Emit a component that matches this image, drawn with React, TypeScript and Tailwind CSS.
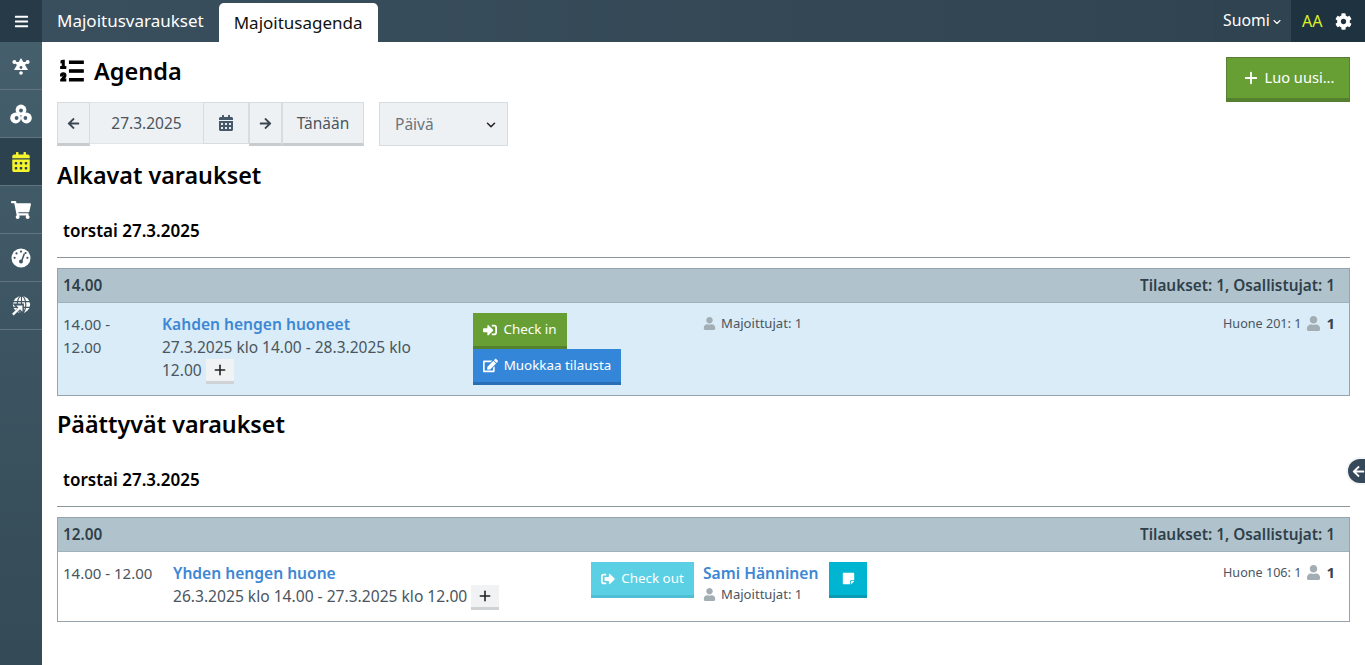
import { ReactNode } from 'react';
import { ChevronDown, Plus } from 'lucide-react';
import { RiListOrdered2 } from 'react-icons/ri';
import {
  FaArrowLeft,
  FaArrowRight,
  FaBars,
  FaCalendarAlt,
  FaCog,
  FaEdit,
  FaShoppingCart,
  FaSignInAlt,
  FaSignOutAlt,
  FaStickyNote,
  FaUser,
} from 'react-icons/fa';

function TreeIcon() {
  return (
    <svg viewBox="0 0 20 20" className="w-[20px] h-[20px]" fill="currentColor">
      <path d="M10 2 17 14H3Z" />
      <circle cx="3.4" cy="6" r="2" />
      <circle cx="16.6" cy="6" r="2" />
      <path d="M3 6h14l-3 3H6Z" />
      <circle cx="10" cy="17" r="1.8" />
      <circle cx="10" cy="11.5" r="1.4" fill="#46606e" />
    </svg>
  );
}

function ClusterIcon() {
  return (
    <svg viewBox="0 0 22 20" className="w-[22px] h-[20px]" fill="currentColor">
      <circle cx="11" cy="6" r="5.4" />
      <circle cx="5.6" cy="14" r="5.4" />
      <circle cx="16.4" cy="14" r="5.4" />
      <circle cx="11" cy="6.5" r="1.9" fill="#46606e" />
      <circle cx="6.6" cy="14" r="1.9" fill="#46606e" />
      <circle cx="15.4" cy="14" r="1.9" fill="#46606e" />
    </svg>
  );
}

function GaugeIcon() {
  return (
    <svg viewBox="0 0 20 20" className="w-[20px] h-[20px]">
      <circle cx="10" cy="10" r="9.5" fill="currentColor" />
      <g fill="#3f5765">
        <circle cx="10" cy="3.6" r="1.1" />
        <circle cx="5.5" cy="5.4" r="1.1" />
        <circle cx="3.6" cy="9.8" r="1.1" />
        <circle cx="16.4" cy="9.8" r="1.1" />
        <circle cx="14.6" cy="5" r="1.1" />
      </g>
      <path d="M13.4 5.6 10.9 12.2" stroke="#3f5765" strokeWidth="1.5" />
      <circle cx="10" cy="13.5" r="2" fill="#3f5765" />
    </svg>
  );
}

function GlobeArrowIcon() {
  return (
    <svg viewBox="0 0 22 22" className="w-[21px] h-[21px]" fill="none">
      <circle cx="11" cy="10" r="9" fill="currentColor" />
      <g stroke="#3f5765" strokeWidth="1.2">
        <path d="M2 7h18M2 13h18M11 1v18" />
        <ellipse cx="11" cy="10" rx="4.5" ry="9" />
      </g>
      <path d="M1.5 21 9 13.5M5 10.5h7v7Z" stroke="#3f5765" strokeWidth="3" />
      <path d="M2 20.5 9 13.5" stroke="currentColor" strokeWidth="2.4" />
      <path d="M5.5 11h6.5v6.5Z" fill="currentColor" />
    </svg>
  );
}

const navItems: { icon: ReactNode; active?: boolean }[] = [
  { icon: <TreeIcon /> },
  { icon: <ClusterIcon /> },
  { icon: <FaCalendarAlt className="text-[20px]" />, active: true },
  { icon: <FaShoppingCart className="text-[20px]" /> },
  { icon: <GaugeIcon /> },
  { icon: <GlobeArrowIcon /> },
];

function Sidebar() {
  return (
    <aside className="w-[42px] shrink-0 bg-gradient-to-b from-[#46606e] to-[#344a56] flex flex-col">
      <div className="h-[42px] bg-[#263a47] flex items-center justify-center text-white">
        <FaBars className="text-[15px]" />
      </div>
      {navItems.map((item, i) => (
        <div
          key={i}
          className={
            item.active
              ? 'h-[48px] flex items-center justify-center border-b border-[#62747f] bg-[#2c424f] text-[#f4f52c]'
              : 'h-[48px] flex items-center justify-center border-b border-[#62747f] text-white'
          }
        >
          {item.icon}
        </div>
      ))}
    </aside>
  );
}

function TopBar() {
  return (
    <header className="h-[42px] bg-gradient-to-r from-[#3a4f5d] to-[#2f4350] flex text-white">
      <div className="h-full px-[15px] flex items-center text-[17px] pb-[1px]">Majoitusvaraukset</div>
      <div className="mt-[3px] h-[39px] w-[159px] bg-white text-[#111] rounded-t-[5px] flex items-center justify-center text-[17px]">
        Majoitusagenda
      </div>
      <div className="ml-auto flex h-full">
        <div className="w-[78px] flex items-center justify-center gap-[1px] pl-[2px] text-[15.8px] bg-[#2f4350]">
          Suomi <ChevronDown size={12} strokeWidth={2.2} className="mt-[1px]" />
        </div>
        <div className="w-[74px] bg-[#1f3240] flex items-center pl-[11px] gap-[13px]">
          <span className="text-[16px] text-[#dcef2a]">AA</span>
          <FaCog className="text-[17px]" />
        </div>
      </div>
    </header>
  );
}

function DateToolbar() {
  return (
    <div className="flex items-start text-[#4a5560] text-[15.5px]">
      <button className="w-[33px] h-[44px] bg-[#eef1f3] border border-[#d8dcdf] border-b-[3px] border-b-[#c8cccf] flex items-center justify-center text-[#3b4650]">
        <FaArrowLeft className="text-[13px]" />
      </button>
      <div className="w-[113px] h-[42px] bg-[#eef1f3] border-y border-[#e2e5e7] flex items-center justify-center pt-[2px]">27.3.2025</div>
      <div className="w-[46px] h-[42px] bg-[#eef1f3] border border-[#d8dcdf] flex items-center justify-center">
        <FaCalendarAlt className="text-[16px] text-[#46586a]" />
      </div>
      <button className="w-[33px] h-[44px] bg-[#eef1f3] border border-[#d8dcdf] border-b-[3px] border-b-[#c8cccf] flex items-center justify-center text-[#3b4650]">
        <FaArrowRight className="text-[13px]" />
      </button>
      <button className="w-[82px] h-[44px] bg-[#eef1f3] border border-[#d8dcdf] border-b-[3px] border-b-[#c8cccf] flex items-center justify-center pt-[1px]">
        Tänään
      </button>
      <div className="ml-[15px] w-[129px] h-[44px] bg-[#eef1f3] border border-[#d8dcdf] flex items-center justify-between pl-[15px] pr-[9px] pt-[1px] text-[#6a747c]">
        Päivä
        <ChevronDown size={14} strokeWidth={2.6} className="text-[#222]" />
      </div>
    </div>
  );
}

function SmallPlus() {
  return (
    <span className="inline-flex align-middle w-[28px] h-[25px] bg-[#f0f2f3] border-b-[3px] border-b-[#d0d3d5] items-center justify-center text-[#222]">
      <Plus size={16} strokeWidth={2.4} />
    </span>
  );
}

function Guests({ room }: { room: string }) {
  return (
    <div className="ml-auto -mt-[2px] flex items-center text-[12.6px] h-[24px] text-[#4a5560]">
      {room}: 1
      <FaUser className="text-[15px] text-[#a3adb4] ml-[5px] mr-[5px]" />
      <b className="text-[15px] text-[#36454f]">1</b>
    </div>
  );
}

function ActionButton({ className, children }: { className: string; children: ReactNode }) {
  return <button className={`h-[36px] flex items-center justify-center gap-[6px] text-[13.4px] text-white ${className}`}>{children}</button>;
}

function Section({ title, time, children }: { title: string; time: string; children: ReactNode }) {
  return (
    <section>
      <h2 className="text-[23.3px] leading-[30px] font-semibold text-black">{title}</h2>
      <h3 className="mt-[29px] px-[6px] text-[17px] leading-[24px] font-semibold text-black">torstai 27.3.2025</h3>
      <hr className="mt-[14px] mb-[10px] border-[#8b959c]" />
      <div className="border border-[#97a3ac]">
        <div className="h-[34px] bg-[#b0c3cc] border-b border-[#9fb1ba] flex items-center justify-between px-[5px] text-[15.35px] font-semibold text-[#2f3f4a]">
          <span>{time}</span>
          <span className="pr-[9px]">Tilaukset: 1, Osallistujat: 1</span>
        </div>
        {children}
      </div>
    </section>
  );
}

export default function App() {
  return (
    <div className="h-[665px] flex overflow-hidden bg-white font-['Noto_Sans',sans-serif] relative">
      <Sidebar />
      <div className="flex-1 min-w-0 flex flex-col">
        <TopBar />
        <main className="px-[15px]">
          <div className="flex items-start justify-between">
            <h1 className="mt-[13px] flex items-center gap-[7px] text-[23.5px] leading-[32px] font-semibold text-black">
              <RiListOrdered2 className="text-[30px]" stroke="currentColor" strokeWidth={0.9} /> Agenda
            </h1>
            <button className="mt-[15px] w-[124px] h-[45px] bg-[#679f35] border border-[#5a7f34] border-b-[4px] border-b-[#55802f] text-white flex items-center justify-center gap-[5px] text-[14.6px]">
              <Plus size={18} strokeWidth={2.4} /> Luo uusi...
            </button>
          </div>
          <DateToolbar />
          <div className="mt-[14px]">
            <Section title="Alkavat varaukset" time="14.00">
              <div className="h-[92px] bg-[#d9ecf7] flex px-[5px] pt-[10px] text-[15.5px] leading-[23px] text-[#4a5560]">
                <div className="w-[99px]"><span className="text-[15px]">14.00 -<br />12.00</span></div>
                <div className="w-[311px] pr-[40px]">
                  <a className="block text-[15.6px] font-semibold text-[#3d87d4]">Kahden hengen huoneet</a>
                  27.3.2025 klo 14.00 - 28.3.2025 klo 12.00 <SmallPlus />
                </div>
                <div className="w-[230px]">
                  <ActionButton className="w-[94px] bg-[#679f35] border-b-[3px] border-b-[#55802f]">
                    <FaSignInAlt className="text-[14px]" /> Check in
                  </ActionButton>
                  <ActionButton className="w-[148px] bg-[#3487d8] border-b-[3px] border-b-[#2a6fb5]">
                    <FaEdit className="text-[15px]" /> Muokkaa tilausta
                  </ActionButton>
                </div>
                <div className="flex items-start text-[13.1px] gap-[5px] h-[20px] leading-[20px]">
                  <FaUser className="text-[13px] text-[#a3adb4] mt-[4px]" /> Majoittujat: 1
                </div>
                <div className="ml-auto pr-[9px]">
                  <Guests room="Huone 201" />
                </div>
              </div>
            </Section>
          </div>
          <div className="mt-[13px]">
            <Section title="Päättyvät varaukset" time="12.00">
              <div className="h-[69px] bg-white flex px-[5px] pt-[10px] text-[15.6px] leading-[23px] text-[#4a5560]">
                <div className="w-[110px]"><span className="text-[15px]">14.00 - 12.00</span></div>
                <div className="w-[418px]">
                  <a className="block text-[15.6px] font-semibold text-[#3d87d4]">Yhden hengen huone</a>
                  26.3.2025 klo 14.00 - 27.3.2025 klo 12.00 <SmallPlus />
                </div>
                <div className="w-[112px]">
                  <ActionButton className="w-[103px] bg-[#5bd0e4] border-b-[3px] border-b-[#4fbfd3] text-[#e9fafd]">
                    <FaSignOutAlt className="text-[14px]" /> Check out
                  </ActionButton>
                </div>
                <div className="w-[126px]">
                  <a className="block text-[15.6px] font-semibold text-[#3d87d4]">Sami Hänninen</a>
                  <div className="flex items-center text-[13.1px] leading-[19px] gap-[5px]">
                    <FaUser className="text-[13px] text-[#a3adb4]" /> Majoittujat: 1
                  </div>
                </div>
                <button className="w-[38px] h-[36px] bg-[#00b5d1] border-b-[3px] border-b-[#0a9bb2] flex items-center justify-center text-white">
                  <FaStickyNote className="text-[13px]" />
                </button>
                <div className="ml-auto pr-[9px]">
                  <Guests room="Huone 106" />
                </div>
              </div>
            </Section>
          </div>
        </main>
      </div>
      <div className="absolute right-0 top-[459px] w-[17px] h-[24px] bg-[#36495a] rounded-l-full shadow-[0_0_0_2px_#f3f5f6] flex items-center justify-start pl-[4px] text-white">
        <FaArrowLeft className="text-[13px]" />
      </div>
    </div>
  );
}
